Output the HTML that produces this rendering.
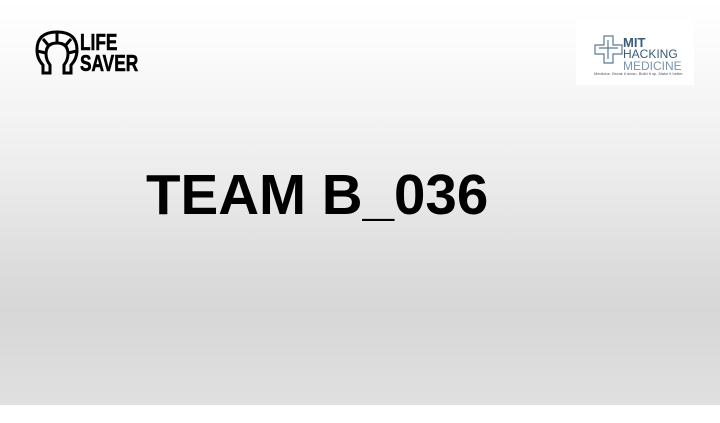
<!DOCTYPE html>
<html><head><meta charset="utf-8"><style>
html,body{margin:0;padding:0;width:720px;height:423px;overflow:hidden;background:#fff}
.slide{position:absolute;left:0;top:0;width:720px;height:405px;background:linear-gradient(to bottom,#ffffff 0px,#fafafa 60px,#ededed 170px,#dadada 280px,#d7d7d7 310px,#e0e0e0 405px);}
.title{position:absolute;left:146px;top:160px;font:bold 56.5px "Liberation Sans",sans-serif;color:#000;white-space:nowrap;line-height:70px}
.logo{position:absolute;left:35px;top:29px}
.lt{position:absolute;left:80px;top:32px;font:900 23px/21px "Liberation Sans",sans-serif;color:#000;transform:scaleX(0.75);transform-origin:left top;-webkit-text-stroke:0.6px #000}
.mit{position:absolute;left:576px;top:20px;width:118px;height:65px;background:#fff}
.mit .t{position:absolute;left:47px;font-family:"Liberation Sans",sans-serif;color:#3b5b78;line-height:1}
</style></head><body>
<div class="slide">
<svg class="logo" width="44" height="48" viewBox="0 0 44 48" fill="none" stroke="#000" stroke-width="3">
<path d="M8 44 L8 36 Q2 30 2 21 Q2 3 22 3 Q42 3 42 21 Q42 30 36 36 L36 44 L29 44 L29 36 Q33 31 33 25 Q33 14 22 14 Q11 14 11 25 Q11 31 15 36 L15 44 Z"/>
<path d="M22 3 L22 14 M8 10 L14 17 M36 10 L30 17 M2 22 L11 24 M42 22 L33 24"/>
</svg>
<div class="lt">LIFE<br>SAVER</div>
<div class="mit">
<svg style="position:absolute;left:18px;top:14px" width="30" height="32" viewBox="0 0 30 32" fill="none" stroke="#5a7a96" stroke-width="1.2">
<path d="M10 2 H19 V11 H28 V20 H19 V29 H10 V20 H1 V11 H10 Z"/><path d="M5 14 H24 M14 6 V25"/>
</svg>
<div class="t" style="top:16px;font-size:13px;font-weight:bold">MIT</div>
<div class="t" style="top:28px;font-size:12px">HACKING</div>
<div class="t" style="top:40px;font-size:12px;color:#7b95ad">MEDICINE</div>
<div class="t" style="left:18px;top:52px;font-size:4px;color:#556">Medicine. Break it down. Build it up. Make it better.</div>
</div>
<div class="title">TEAM B_036</div>
</div>
</body></html>
